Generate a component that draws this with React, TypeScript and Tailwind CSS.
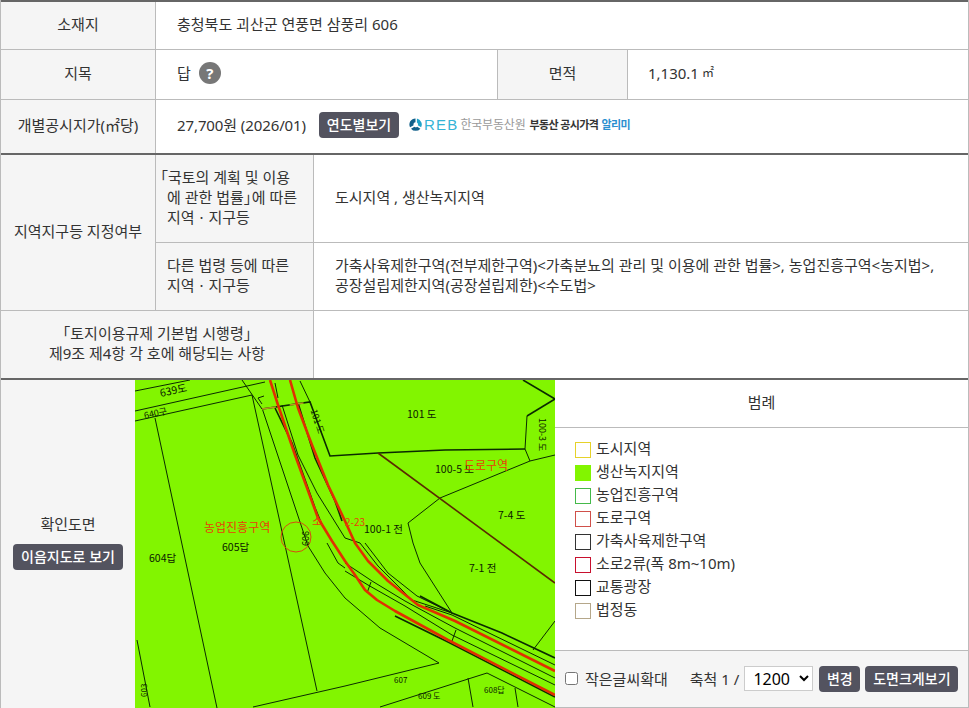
const thin = [
  "135,391 190,380",
  "135,411 265,382",
  "135,421 252,395",
  "155,418 217,708",
  "242,380 262,409",
  "252,395 317,691",
  "253,707 345,686 439,663 380,628 345,598 325,573 308,546 262,408",
  "275,383 278,398",
  "300,381 310,402",
  "282,405 298,455 317,493 345,538 360,543 378,566 412,600 452,613",
  "365,543 388,573 417,596 452,613",
  "425,606 452,615 555,665",
  "345,563 372,581 405,601 455,628 555,678",
  "345,571 368,585 405,606 452,635 555,685",
  "327,543 338,563 345,568",
  "527,416 525,449 530,461 555,455",
  "530,461 440,498 408,523 413,543 420,563 452,613",
  "380,707 487,673 555,707",
  "468,678 473,707",
  "515,688 518,707",
  "533,650 555,621",
  "452,641 456,630",
  "367,593 371,582",
  "137,640 150,707",
  "262,404 258,398 264,396",
];

const thick = [
  "262,409 310,402 330,456 378,453 445,450 525,449",
  "523,380 555,399",
  "527,416 555,399",
  "275,408 292,443 315,508 322,525",
  "298,403 315,458 335,501 342,521",
  "395,616 448,642 555,697",
  "420,596 452,613 502,633 555,658",
];

function RoadMap() {
  return (
    <svg viewBox="135 380 420 328" className="h-[328px] w-[420px] shrink-0 bg-[#82f500]">
      <g fill="none" stroke="#0a2a00" strokeWidth="1">
        {thin.map((p) => (
          <polyline key={p} points={p} />
        ))}
      </g>
      <g fill="none" stroke="#0a2a00" strokeWidth="1.6">
        {thick.map((p) => (
          <polyline key={p} points={p} />
        ))}
      </g>
      <polyline points="262,409 310,402" fill="none" stroke="#b59a20" strokeWidth="1.4" strokeDasharray="14 14" />
      <polyline points="378,453 555,583" fill="none" stroke="#5a2a00" strokeWidth="1.6" />
      <g fill="none" stroke="#e03000" strokeWidth="2.6" strokeLinejoin="round">
        <polyline points="270,380 278,405 295,455 318,518 332,541 345,561 355,575 365,590 377,600 395,611 448,640 555,695" />
        <polyline points="290,380 298,408 312,445 328,485 345,521 355,543 368,561 388,581 418,605 455,621 555,671" />
      </g>
      <circle cx="296" cy="537" r="15" fill="none" stroke="#d84a10" strokeWidth="1" />
      <g fill="#0a2000" fontSize="10.5" fontFamily="'Noto Sans CJK KR', sans-serif">
        <text x="160" y="397" transform="rotate(-12 160 393)">639도</text>
        <text x="144" y="419" fontSize="9" transform="rotate(-12 144 415)">640구</text>
        <text x="407" y="418">101 도</text>
        <text x="435" y="473">100-5 도</text>
        <text x="498" y="519">7-4 도</text>
        <text x="364" y="533">100-1 전</text>
        <text x="222" y="551">605답</text>
        <text x="149" y="562">604답</text>
        <text x="469" y="572">7-1 전</text>
        <text x="484" y="693" fontSize="8">608답</text>
        <text x="418" y="699" fontSize="8">609 도</text>
        <text x="394" y="683" fontSize="8">607</text>
        <text fontSize="9" transform="translate(539 418) rotate(90)">100-3 도</text>
        <text x="305" y="418" fontSize="9" transform="rotate(72 313 418)">101 도</text>
        <text x="296" y="549" fontSize="9" transform="rotate(-90 301 541)">606</text>
        <text x="136" y="694" fontSize="8" transform="rotate(-90 143 690)">603</text>
      </g>
      <g fill="#e8400a" fontSize="12" fontFamily="'Noto Sans CJK KR', sans-serif">
        <text x="204" y="532">농업진흥구역</text>
        <text x="464" y="470">도로구역</text>
        <text x="312" y="526">소</text>
        <text x="345" y="526" fontSize="10">2-23</text>
      </g>
    </svg>
  );
}

function Label({ children, className = "" }: { children: React.ReactNode; className?: string }) {
  return (
    <div className={`flex items-center justify-center bg-[#f5f5f5] pb-[4px] text-center ${className}`}>
      {children}
    </div>
  );
}

function DarkButton({ children, className = "" }: { children: React.ReactNode; className?: string }) {
  return (
    <button className={`rounded-[4px] bg-[#53535f] text-[14px] font-medium leading-none text-white ${className}`}>
      {children}
    </button>
  );
}

function RebLogo() {
  return (
    <div className="ml-[9px] flex items-center">
      <svg viewBox="0 0 16 16" className="h-[15px] w-[15px]">
        <path d="M8 1.5A6.5 6.5 0 0 0 2.2 11L6 8.8A2.4 2.4 0 0 1 8 5.6Z" fill="#12608a" />
        <path d="M9.5 1.7A6.5 6.5 0 0 1 14 11L10.4 8.8A2.4 2.4 0 0 0 9.5 5.8Z" fill="#1fa3c9" />
        <path d="M3.2 12.4L6.8 10.3A2.4 2.4 0 0 0 9.8 10.3L13.2 12.4A6.5 6.5 0 0 1 3.2 12.4Z" fill="#12608a" />
      </svg>
      <span className="ml-[1px] font-['Liberation_Sans',sans-serif] text-[15px] leading-none tracking-[1.2px] text-[#35b3d6]">REB</span>
      <span className="ml-[2px] text-[12px] leading-none tracking-[-0.2px] text-[#9a9a9a]">한국부동산원</span>
      <span className="ml-[4px] text-[11px] font-bold leading-none tracking-[-0.6px] text-[#333]">부동산 공시가격</span>
      <span className="ml-[3px] text-[11px] font-bold leading-none tracking-[-0.6px] text-[#2b8fd0]">알리미</span>
    </div>
  );
}

const legend = [
  { name: "도시지역", box: "border-[#e6d22a]" },
  { name: "생산녹지지역", box: "border-[#82f500] bg-[#82f500]" },
  { name: "농업진흥구역", box: "border-[#45b94a]" },
  { name: "도로구역", box: "border-[#d0504a]" },
  { name: "가축사육제한구역", box: "border-[#333333]" },
  { name: "소로2류(폭 8m~10m)", box: "border-[#c8102e]" },
  { name: "교통광장", box: "border-[#111111]" },
  { name: "법정동", box: "border-[#b5a78a]" },
];

export default function App() {
  return (
    <div className="h-[708px] w-[969px] overflow-hidden border-x border-[#bbbbbb] bg-white font-['Noto_Sans','Noto_Sans_CJK_KR',sans-serif] text-[15px] leading-[20px] text-[#333333]">
      <div className="border-t-2 border-[#666666]">
        <div className="flex h-[48px] border-b border-[#bbbbbb]">
          <Label className="w-[155px] border-r border-[#bbbbbb]">소재지</Label>
          <div className="flex flex-1 items-center pb-[4px] pl-[21px]">충청북도 괴산군 연풍면 삼풍리 606</div>
        </div>
        <div className="flex h-[50px] border-b border-[#bbbbbb]">
          <Label className="w-[155px] border-r border-[#bbbbbb]">지목</Label>
          <div className="flex w-[341px] items-center pb-[4px] pl-[21px]">
            답
            <span className="ml-[8px] flex h-[22px] w-[22px] items-center justify-center rounded-full bg-[#777777] text-[15px] font-bold text-white">?</span>
          </div>
          <Label className="w-[131px] border-x border-[#bbbbbb]">면적</Label>
          <div className="flex flex-1 items-center pb-[4px] pl-[20px]">
            1,130.1 <span className="ml-[3px] text-[12px]">㎡</span>
          </div>
        </div>
        <div className="flex h-[53px]">
          <Label className="w-[155px] border-r border-[#bbbbbb]">개별공시지가(㎡당)</Label>
          <div className="flex flex-1 items-center pb-[4px] pl-[21px]">
            <span className="tracking-[-0.1px]">27,700원 (2026/01)</span>
            <DarkButton className="ml-[13px] h-[26px] w-[80px]">연도별보기</DarkButton>
            <RebLogo />
          </div>
        </div>
      </div>

      <div className="grid grid-cols-[155px_158px_1fr] grid-rows-[88px_68px_67px] border-y-2 border-[#666666]">
        <Label className="row-span-2 border-r border-b border-[#bbbbbb]">지역지구등 지정여부</Label>
        <div className="flex items-center border-r border-b border-[#bbbbbb] bg-[#f5f5f5] pb-[4px] pl-[11px]">
          <p className="indent-[-14px]">「국토의 계획 및 이용<br />에 관한 법률<span className="mr-[-7px]">」</span>에 따른<br />지역ㆍ지구등</p>
        </div>
        <div className="flex items-center border-b border-[#bbbbbb] pb-[4px] pl-[21px]">도시지역 , 생산녹지지역</div>
        <div className="flex items-center border-r border-b border-[#bbbbbb] bg-[#f5f5f5] pb-[4px] pl-[11px]">
          <p>다른 법령 등에 따른<br />지역ㆍ지구등</p>
        </div>
        <div className="flex items-center border-b border-[#bbbbbb] pb-[4px] pl-[21px] pr-[10px]">
          <p className="break-keep">가축사육제한구역(전부제한구역)&lt;가축분뇨의 관리 및 이용에 관한 법률&gt;, 농업진흥구역&lt;농지법&gt;, 공장설립제한지역(공장설립제한)&lt;수도법&gt;</p>
        </div>
        <Label className="col-span-2 border-r border-[#bbbbbb]">
          <p>「토지이용규제 기본법 시행령」<br />제9조 제4항 각 호에 해당되는 사항</p>
        </Label>
        <div />
      </div>

      <div className="flex h-[328px]">
        <div className="flex w-[134px] shrink-0 flex-col items-center justify-center gap-[10px] bg-[#f5f5f5] pb-[4px]">
          <span>확인도면</span>
          <DarkButton className="h-[26px] w-[110px]">이음지도로 보기</DarkButton>
        </div>
        <RoadMap />
        <div className="flex flex-1 flex-col">
          <div className="flex h-[48px] items-center justify-center border-b border-[#bbbbbb] pb-[4px]">범례</div>
          <ul className="flex flex-1 flex-col gap-[3px] pl-[20px] pt-[11px]">
            {legend.map((item) => (
              <li key={item.name} className="flex h-[20px] items-center gap-[5px]">
                <span className={`mt-[1px] h-[16px] w-[16px] border ${item.box}`} />
                <span className="pb-[3px]">{item.name}</span>
              </li>
            ))}
          </ul>
          <div className="flex h-[58px] items-center border-y border-[#bbbbbb] bg-[#f5f5f5] pb-[1px] pl-[10px]">
            <input type="checkbox" className="h-[13px] w-[13px]" />
            <span className="ml-[7px]">작은글씨확대</span>
            <span className="ml-[22px]">축척 1 /</span>
            <select defaultValue="1200" className="ml-[5px] h-[25px] w-[69px] border border-[#cccccc] bg-white pl-[4px] text-[16px] text-black">
              <option>600</option>
              <option>1200</option>
              <option>2400</option>
            </select>
            <DarkButton className="ml-[6px] h-[26px] w-[41px]">변경</DarkButton>
            <DarkButton className="ml-[5px] h-[26px] w-[93px]">도면크게보기</DarkButton>
          </div>
        </div>
      </div>
    </div>
  );
}
